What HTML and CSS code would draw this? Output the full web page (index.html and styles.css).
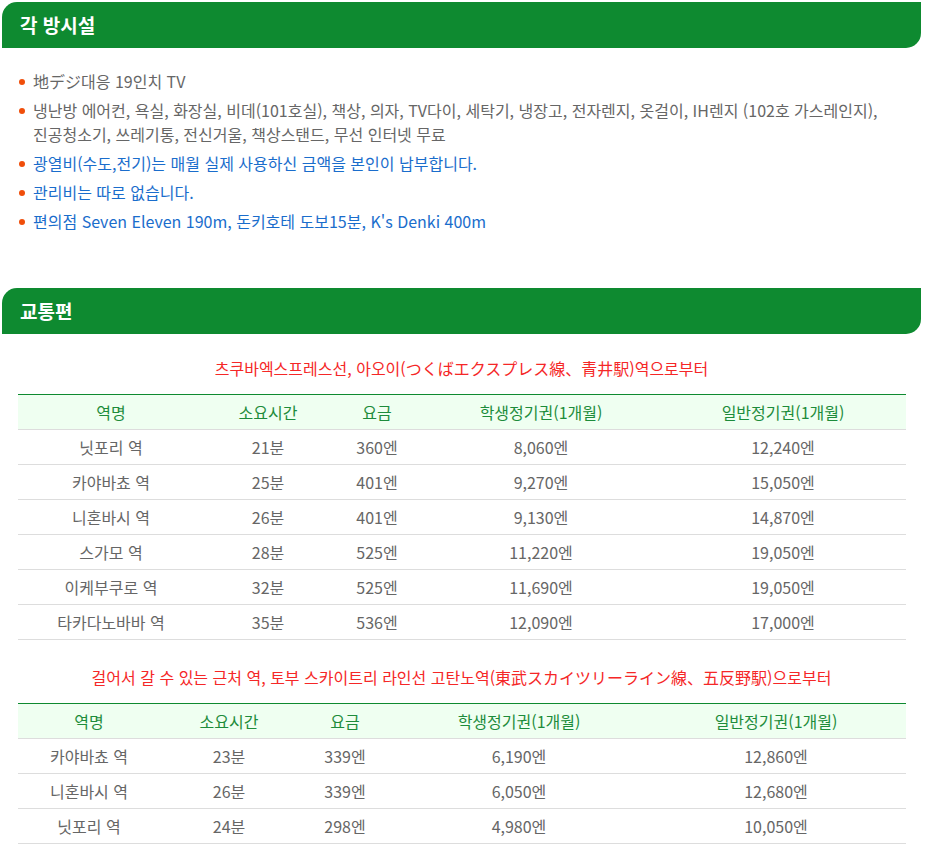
FILE: index.html
```html
<!DOCTYPE html>
<html lang="ko">
  <head>
    <meta charset="UTF-8" />
    <meta name="viewport" content="width=device-width, initial-scale=1.0"/>
    <title>각 방시설 / 교통편</title>
    <link rel="stylesheet" href="styles.css">
  </head>
  <body>
    <div class="page">
      <h2 class="section-title">각 방시설</h2>
      <ul class="facilities">
        <li>地デジ대응 19인치 TV</li>
        <li>냉난방 에어컨, 욕실, 화장실, 비데(101호실), 책상, 의자, TV다이, 세탁기, 냉장고, 전자렌지, 옷걸이, IH렌지 (102호 가스레인지), 진공청소기, 쓰레기통, 전신거울, 책상스탠드, 무선 인터넷 무료</li>
        <li class="blue">광열비(수도,전기)는 매월 실제 사용하신 금액을 본인이 납부합니다.</li>
        <li class="blue">관리비는 따로 없습니다.</li>
        <li class="blue">편의점 Seven Eleven 190m, 돈키호테 도보15분, K's Denki 400m</li>
      </ul>

      <h2 class="section-title traffic">교통편</h2>

      <p class="route">츠쿠바엑스프레스선, 아오이(つくばエクスプレス線、青井駅)역으로부터</p>
      <table class="fares fares-a">
        <colgroup>
          <col class="c1"><col class="c2"><col class="c3"><col class="c4"><col class="c5">
        </colgroup>
        <thead>
          <tr><th>역명</th><th>소요시간</th><th>요금</th><th>학생정기권(1개월)</th><th>일반정기권(1개월)</th></tr>
        </thead>
        <tbody>
          <tr><td>닛포리 역</td><td>21분</td><td>360엔</td><td>8,060엔</td><td>12,240엔</td></tr>
          <tr><td>카야바쵸 역</td><td>25분</td><td>401엔</td><td>9,270엔</td><td>15,050엔</td></tr>
          <tr><td>니혼바시 역</td><td>26분</td><td>401엔</td><td>9,130엔</td><td>14,870엔</td></tr>
          <tr><td>스가모 역</td><td>28분</td><td>525엔</td><td>11,220엔</td><td>19,050엔</td></tr>
          <tr><td>이케부쿠로 역</td><td>32분</td><td>525엔</td><td>11,690엔</td><td>19,050엔</td></tr>
          <tr><td>타카다노바바 역</td><td>35분</td><td>536엔</td><td>12,090엔</td><td>17,000엔</td></tr>
        </tbody>
      </table>

      <p class="route second">걸어서 갈 수 있는 근처 역, 토부 스카이트리 라인선 고탄노역(東武スカイツリーライン線、五反野駅)으로부터</p>
      <table class="fares fares-b">
        <colgroup>
          <col class="c1"><col class="c2"><col class="c3"><col class="c4"><col class="c5">
        </colgroup>
        <thead>
          <tr><th>역명</th><th>소요시간</th><th>요금</th><th>학생정기권(1개월)</th><th>일반정기권(1개월)</th></tr>
        </thead>
        <tbody>
          <tr><td>카야바쵸 역</td><td>23분</td><td>339엔</td><td>6,190엔</td><td>12,860엔</td></tr>
          <tr><td>니혼바시 역</td><td>26분</td><td>339엔</td><td>6,050엔</td><td>12,680엔</td></tr>
          <tr><td>닛포리 역</td><td>24분</td><td>298엔</td><td>4,980엔</td><td>10,050엔</td></tr>
        </tbody>
      </table>
    </div>
  </body>
</html>
```

FILE: styles.css
```css
* {
  box-sizing: border-box;
  margin: 0;
  padding: 0;
}

body {
  font-family: 'Noto Sans CJK KR', 'Noto Sans', sans-serif;
  font-size: 16px;
  color: #666;
  background: #fff;
  word-break: keep-all;
}

.page {
  margin: 2px 6px 0 2px;
}

.section-title {
  height: 46px;
  line-height: 46px;
  padding-left: 18px;
  background-color: #0e8a30;
  color: #fff;
  font-size: 19px;
  font-weight: bold;
  border-radius: 15px 0 15px 0;
}

.facilities {
  list-style: none;
  padding: 21px 0 0 31px;
}

.facilities li {
  position: relative;
  line-height: 24px;
  margin-bottom: 5px;
}

.facilities li::before {
  content: "";
  position: absolute;
  left: -14px;
  top: 10px;
  width: 6px;
  height: 6px;
  border-radius: 50%;
  background-color: #f04e0a;
}

.facilities li.blue {
  color: #1a6dcc;
}

.traffic {
  margin-top: 55px;
}

.route {
  text-align: center;
  color: #f52727;
  line-height: 24px;
  margin-top: 22px;
  margin-bottom: 14px;
}

.route.second {
  margin-top: 25px;
}

.fares {
  width: 888px;
  margin-left: 16px;
  border-collapse: collapse;
  table-layout: fixed;
  border-top: 1px solid #0e8a30;
}

.fares th,
.fares td {
  height: 35px;
  text-align: center;
  font-weight: normal;
  border-bottom: 1px solid #dddddd;
  white-space: nowrap;
}

.fares th {
  background-color: #effff1;
  color: #1d8c3b;
}

.fares-a .c1 { width: 186px; }
.fares-a .c2 { width: 128px; }
.fares-a .c3 { width: 90px; }
.fares-a .c4 { width: 238px; }
.fares-a .c5 { width: 246px; }

.fares-b .c1 { width: 142px; }
.fares-b .c2 { width: 138px; }
.fares-b .c3 { width: 94px; }
.fares-b .c4 { width: 254px; }
.fares-b .c5 { width: 260px; }
```
